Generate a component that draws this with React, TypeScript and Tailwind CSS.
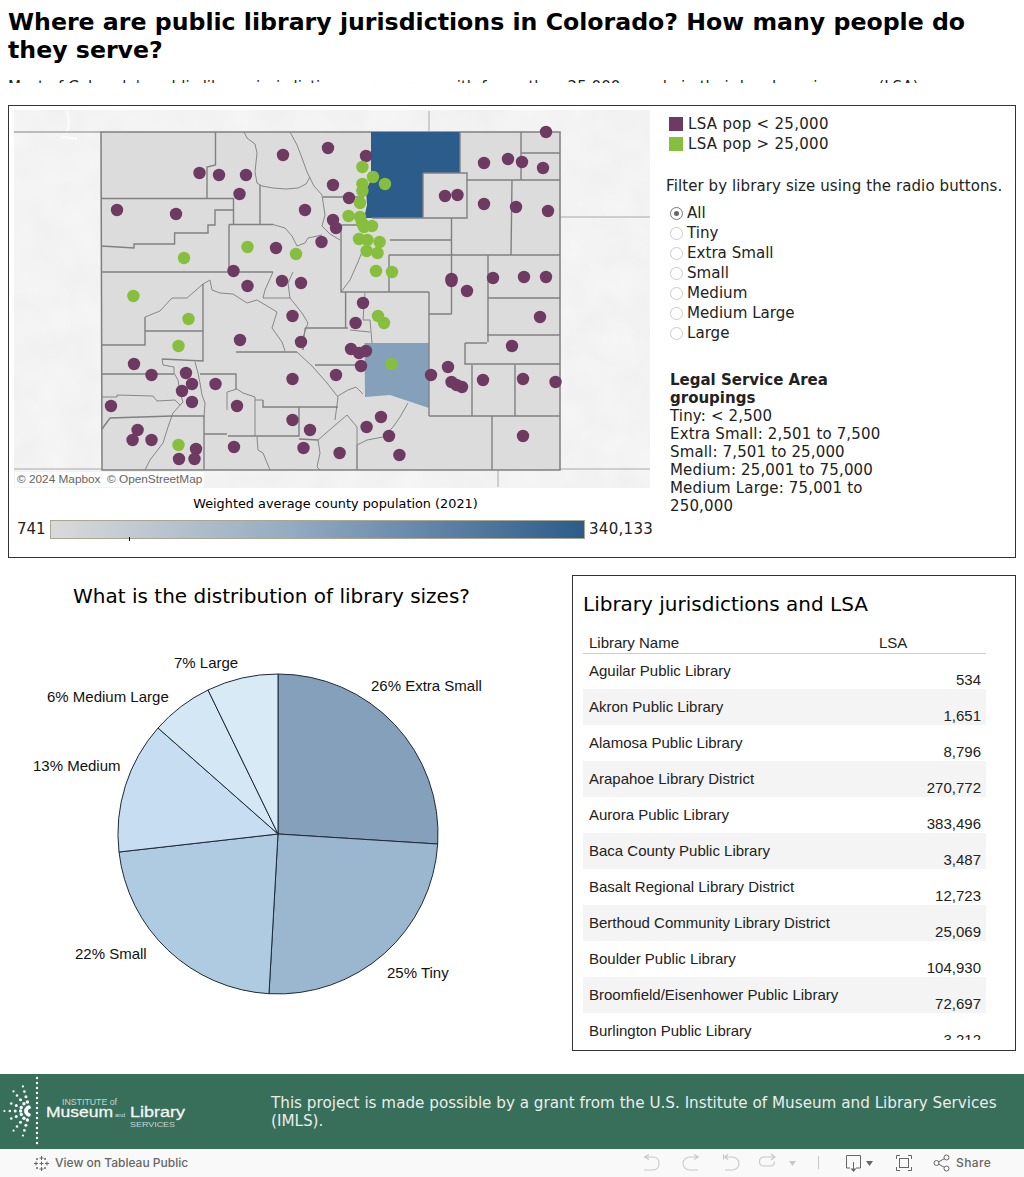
import React from "react";

const dejavu = "font-['DejaVu_Sans',sans-serif]";

const purpleDots = [
  [546, 132], [328, 148], [283, 155], [366, 156], [199.5, 173], [219, 175], [246, 175], [239.5, 194],
  [333, 185], [349, 198], [305, 210], [117, 210], [176, 214], [484, 163], [508, 159], [522, 162],
  [543, 168], [445, 196], [457.5, 195], [484, 204], [516, 207], [548, 211], [333, 220], [336, 228],
  [321.5, 242], [276, 248], [233.5, 271], [247.5, 286], [282, 281], [301, 283], [451.5, 279], [451.5, 281],
  [467, 291], [493, 278], [524, 277], [546, 277], [363, 303], [292.5, 316], [355.6, 323], [540, 317],
  [240, 340], [301, 342], [512, 346], [351, 349], [359, 353], [366, 351], [361, 366], [134, 364],
  [151.5, 375], [186, 373], [192, 384], [215.5, 384], [182, 391], [192, 402], [111, 406], [237, 406],
  [336, 375], [292.5, 379], [431, 375], [448, 367], [451.5, 382], [456.5, 385], [462, 387], [483, 380],
  [523, 379], [555.5, 382], [292.5, 420], [310, 430], [381, 417], [366.6, 427], [389, 436], [523, 436],
  [137.6, 430], [132.6, 440], [151.5, 440], [196, 449], [179, 459], [194.5, 459], [234, 447], [303.5, 448],
  [339.6, 453], [399.4, 455],
];

const greenDots = [
  [362.4, 167], [373, 177], [385, 184], [362.4, 184], [362.4, 191], [360, 203], [348.5, 216], [360, 217],
  [362, 223], [364, 227], [372, 226], [359, 239], [367.4, 240], [379.6, 242], [366.6, 251], [377.5, 253],
  [376, 271], [392, 272], [247.5, 247], [296, 254], [184, 258], [133.4, 296], [188.5, 319], [178.5, 346],
  [378, 316], [384, 323], [391.4, 364], [178.5, 445],
];

// county borders in page pixels: straight section lines are heavier than the river ones
const straightLines = [
  "M215.5 132V165L207 167V198",
  "M101 198.5H233.5V224",
  "M101 246L134 248V244H174.6V233H208V225H215V210H233.5",
  "M260 185V224",
  "M229 224.5H273",
  "M229 224.5V272",
  "M101 272H273",
  "M323 197H364",
  "M341 225H372",
  "M341 225V292H389V255",
  "M389 255H560",
  "M451.5 218V314",
  "M451.5 240H390",
  "M423 173H467V218H423V173",
  "M372 218H451",
  "M460 132V173",
  "M467 180H560",
  "M512 180L511 255",
  "M521 132V180",
  "M521 153H560",
  "M488 255V342",
  "M488 298H560",
  "M487 335H560",
  "M465 343H487",
  "M465 343V364H560",
  "M429 292V416",
  "M429 314H451.5",
  "M429 416H560",
  "M345.6 292H429",
  "M345.6 292V328",
  "M472 365V416",
  "M515 365V416",
  "M492 416V470",
  "M305 328H348",
  "M101 345H145V317",
  "M145.7 331H203",
  "M203 284V361L162 359",
  "M102 374H174",
  "M200 374H236V389",
  "M236 352H297",
  "M102 429L110 418L172 416H204V470",
  "M204 434H227",
  "M228 436H299V407",
  "M263 400V407H338",
  "M299 439L318 440",
  "M315 365H363",
  "M357 445V470",
];

const riverLines = [
  "M244 132L247 138L255 144L257 153L255 172L257 183L262 186L273 188L286 189L298 188L306 184L310 177",
  "M290 132L297 145L302 158L307 172L314 186L322 195L325 215L322 226L330 234L340 240",
  "M273 224.5L285 228L292 236L297 246L305 243L308 238L322 235",
  "M341 292L350 280L358 262L362 252",
  "M350 330L370 332",
  "M365 293L363 320H370L372 343",
  "M305 328L303 350",
  "M145 317L160 311L172 298H187L203 284L210 280",
  "M162 359L163 365L174 367V373L178 380L180 393L183 402L173 413L168 427L163 443L150 460L145 470",
  "M195 362L198 373L200 383L202 395L205 403L204 417",
  "M102 397H117V395L153 396L157 401L175 400L180 405",
  "M227 410V392L237 389L243 393L255 397V436",
  "M255 400H263",
  "M257 437L258 450L263 453L270 470",
  "M318 440L333 427L347 415L357 427V445",
  "M318 440L320 453L317 467L320 470",
  "M357 445L367 440L383 437L393 427L400 417L408 403",
  "M297 352L313 367L327 383L338 397L335 420",
  "M338 396L348 390L356 387L363 394",
  "M210 280L212 290L220 293L233 294L247 303L257 300L277 312L272 328L282 342L285 351",
  "M273 272L265 290L263 298H290",
  "M293 272L288 283L290 298L302 313L308 323L303 337L303 350",
];

const pieSlices = [
  { d: "M278 834L278 674A160 160 0 0 1 437.7 844Z", fill: "#85a0ba" },
  { d: "M278 834L437.7 844A160 160 0 0 1 269 993.7Z", fill: "#9bb7d0" },
  { d: "M278 834L269 993.7A160 160 0 0 1 119 852Z", fill: "#afcbe2" },
  { d: "M278 834L119 852A160 160 0 0 1 158 728Z", fill: "#c7ddf1" },
  { d: "M278 834L158 728A160 160 0 0 1 208 690Z", fill: "#d3e7f5" },
  { d: "M278 834L208 690A160 160 0 0 1 278 674Z", fill: "#d7eaf6" },
];

const sizes = ["All", "Tiny", "Extra Small", "Small", "Medium", "Medium Large", "Large"];

const libraries = [
  ["Aguilar Public Library", "534"],
  ["Akron Public Library", "1,651"],
  ["Alamosa Public Library", "8,796"],
  ["Arapahoe Library District", "270,772"],
  ["Aurora Public Library", "383,496"],
  ["Baca County Public Library", "3,487"],
  ["Basalt Regional Library District", "12,723"],
  ["Berthoud Community Library District", "25,069"],
  ["Boulder Public Library", "104,930"],
  ["Broomfield/Eisenhower Public Library", "72,697"],
  ["Burlington Public Library", "3,212"],
];

function ColoradoMap() {
  return (
    <svg viewBox="14 110 636 378" className="block w-[636px] h-[378px]">
      <defs>
        <filter id="mottle" x="0" y="0" width="100%" height="100%">
          <feTurbulence type="fractalNoise" baseFrequency="0.03" numOctaves="3" seed="4" />
          <feColorMatrix type="matrix" values="0 0 0 0.07 0.86  0 0 0 0.07 0.86  0 0 0 0.07 0.86  0 0 0 0 1" />
        </filter>
      </defs>
      <rect x="14" y="110" width="636" height="378" fill="#e8e8e8" />
      <rect x="14" y="110" width="636" height="378" filter="url(#mottle)" />
      <path d="M67 111L69 120L68 129L66 134M60 138L64 137L77 139" fill="none" stroke="#fafafa" strokeWidth="2.5" />
      <path d="M560 217H650M14 469H650M429 111V131M498 470V487" fill="none" stroke="#a8a8a8" strokeWidth="1" />
      <path d="M14 132H101" fill="none" stroke="#a8a8a8" strokeWidth="1.5" />
      <path d="M101 132H560V470H102Z" fill="#dcdcdc" stroke="#7f7f7f" strokeWidth="1.5" />
      <path d="M371 132H460V173H423V218H364L367 205L366 190L371 180Z" fill="#2b5c8a" />
      <path d="M364.5 343H429V408L390 395L365 397Z" fill="#85a0ba" />
      <path d={straightLines.join(" ")} fill="none" stroke="#808080" strokeWidth="1.4" />
      <path d={riverLines.join(" ")} fill="none" stroke="#7d7d7d" strokeWidth="0.9" />
      {purpleDots.map(([x, y], i) => (
        <circle key={i} cx={x} cy={y} r="6.2" fill="#6f3a62" />
      ))}
      {greenDots.map(([x, y], i) => (
        <circle key={i} cx={x} cy={y} r="6.2" fill="#86bf3e" />
      ))}
    </svg>
  );
}

function PieChart() {
  return (
    <svg viewBox="0 630 560 380" className="block w-[560px] h-[380px]">
      {pieSlices.map((s) => (
        <path key={s.fill} d={s.d} fill={s.fill} stroke="#1f2937" strokeWidth="1" />
      ))}
      <g className="font-['Liberation_Sans',sans-serif]" fontSize="15" fill="#111">
        <text x="371" y="691">26% Extra Small</text>
        <text x="387" y="978">25% Tiny</text>
        <text x="75" y="959">22% Small</text>
        <text x="33" y="771">13% Medium</text>
        <text x="47" y="702">6% Medium Large</text>
        <text x="174" y="668">7% Large</text>
      </g>
    </svg>
  );
}

function ImlsLogo() {
  const dots: React.ReactElement[] = [];
  for (let y = 1078; y <= 1145; y += 5) {
    dots.push(<circle key={"v" + y} cx="37" cy={y} r="1.2" fill="#fff" />);
  }
  const rays: [number, number][] = [[0, 5], [22, 4], [-22, 4], [50, 5], [-50, 5], [74, 5], [-74, 5]];
  rays.forEach(([deg, count]) => {
    const a = ((180 + deg) * Math.PI) / 180;
    for (let i = 0; i < count; i++) {
      const dist = 4 + i * 5.4;
      dots.push(
        <circle
          key={deg + "-" + i}
          cx={30 + Math.cos(a) * dist}
          cy={1111 + Math.sin(a) * dist}
          r={1.9 - i * 0.2}
          fill="#fff"
        />
      );
    }
  });
  return (
    <svg viewBox="0 1074 200 75" className="block w-[200px] h-[75px] shrink-0">
      {dots}
      <g className="font-['Liberation_Sans',sans-serif]">
        <text x="62" y="1105" fontSize="8.5" fill="#c9d6cf" textLength="55" lengthAdjust="spacingAndGlyphs">INSTITUTE of</text>
        <text x="46" y="1117" fontSize="15" fill="#f4f4f4" stroke="#f4f4f4" strokeWidth="0.3" textLength="67" lengthAdjust="spacingAndGlyphs">Museum</text>
        <text x="115" y="1117" fontSize="6" fill="#d5dfd9">and</text>
        <text x="130" y="1117" fontSize="15.5" fill="#f4f4f4" stroke="#f4f4f4" strokeWidth="0.3" textLength="55" lengthAdjust="spacingAndGlyphs">Library</text>
        <text x="130" y="1127" fontSize="8" fill="#c9d6cf" textLength="45" lengthAdjust="spacingAndGlyphs">SERVICES</text>
      </g>
    </svg>
  );
}

function Toolbar() {
  return (
    <div className="h-7 bg-[#f9f9f9] flex items-center font-['Inter',sans-serif] text-xs text-[#666] pl-[33px] pr-[33px]">
      <svg viewBox="0 0 17 17" className="w-[17px] h-[17px] mr-[5px]" fill="none" stroke="#666" strokeWidth="1">
        <path d="M8.5 1V5M6.5 3H10.5M8.5 12V16M6.5 14H10.5M1 8.5H5M3 6.5V10.5M12 8.5H16M14 6.5V10.5M8.5 6.5V10.5M6.5 8.5H10.5M4 3V5M3 4H5M12 3V5M11 4H13M4 12V14M3 13H5M12 12V14M11 13H13" />
      </svg>
      <span className="font-medium">View on Tableau Public</span>
      <div className="ml-auto flex items-center">
        <svg viewBox="640 1154 316 20" className="w-[316px] h-5" fill="none">
          <g stroke="#c8c8c8" strokeWidth="1.1">
            <path d="M650 1155.5L645.5 1158L650 1160.5M646 1158H654C658 1158 660 1161 660 1164.5C660 1168 658 1171 654 1171H645" />
            <path d="M695 1155.5L699.5 1158L695 1160.5M699 1158H691C687 1158 684 1161 684 1164.5C684 1168 687 1171 691 1171H699" />
            <path d="M724.5 1155.5V1160.5M729 1155.5L725.5 1158L729 1160.5M726 1158H733C737 1158 740 1161 740 1164.5C740 1168 737 1171 733 1171H726" />
            <path d="M772 1155L776 1158L772 1161M775 1158H765C762 1158 760.5 1160 760.5 1162.5C760.5 1165 762 1167 765 1167H771C774 1167 775.5 1165 775.5 1162.5" />
            <path d="M819.5 1157V1170" />
          </g>
          <path d="M790 1162H797L793.5 1167Z" fill="#c8c8c8" />
          <g stroke="#666" strokeWidth="1">
            <path d="M851 1169H847.5V1156.5H861.5V1169H857M854.5 1163V1170" />
            <path d="M897.5 1160V1156.5H901M909 1156.5H912.5V1160M912.5 1168V1171.5H909M901 1171.5H897.5V1168" />
            <rect x="900.5" y="1159.5" width="9" height="9" />
            <circle cx="937.5" cy="1164" r="2.5" />
            <circle cx="947.5" cy="1158.5" r="2.5" />
            <circle cx="947.5" cy="1169.5" r="2.5" />
            <path d="M939.7 1162.8L945.3 1159.7M939.7 1165.2L945.3 1168.3" />
          </g>
          <path d="M851.5 1169.5H857.5L854.5 1173Z" fill="#666" />
          <path d="M867 1162H874L870.5 1167Z" fill="#666" />
        </svg>
        <span className="font-medium w-[35px] ml-[1px] tracking-[0.4px]">Share</span>
      </div>
    </div>
  );
}

export default function App() {
  return (
    <div className={`w-[1024px] h-[1177px] bg-white overflow-hidden text-black ${dejavu}`}>
      {/* title, the intro line is cut off by the dashboard zone */}
      <div className="h-[83px] overflow-hidden px-2 pt-2">
        <h1 className="text-[23.65px] leading-[28px] font-bold">
          Where are public library jurisdictions in Colorado? How many people do they serve?
        </h1>
        <p className="mt-[14px] text-[15.1px] leading-[18px] whitespace-nowrap text-[#222]">
          Most of Colorado's public library jurisdictions serve areas with fewer than 25,000 people in their legal service area (LSA).
        </p>
      </div>

      {/* map panel */}
      <section className="mt-[22px] mx-2 h-[453px] border border-[#333] flex">
        <div className="w-[657px] shrink-0 pl-[5px] pt-1">
          <div className="relative">
            <ColoradoMap />
            <div className="absolute left-[1px] bottom-[1px] h-[15px] bg-white/80 px-[2px] font-['Liberation_Sans',sans-serif] text-[11.8px] leading-[15px] text-[#666]">
              © 2024 Mapbox&nbsp; © OpenStreetMap
            </div>
          </div>
          <div className="mt-[8px] text-center text-[12.85px] leading-4 pr-[9px]">Weighted average county population (2021)</div>
          <div className="mt-[7px] flex items-center h-[20px] text-[15px] text-[#222]">
            <span className="w-[36px] pl-[3px]">741</span>
            <div className="relative w-[535px] h-[19px] border border-[#a9a691] bg-gradient-to-r from-[#dadada] via-[#94abc1] via-45% to-[#2b5c8a]">
              <div className="absolute left-[78px] bottom-[-3px] w-px h-[4px] bg-black" />
            </div>
            <span className="ml-[4px] tracking-[0.3px]">340,133</span>
          </div>
        </div>
        <div className="flex-1 min-w-0 pt-[8px] text-[#222]">
          <div className="pl-[3px] text-[15px] leading-[20px] tracking-[0.3px]">
            <div className="flex items-center gap-[5px]">
              <span className="w-[14px] h-[14px] bg-[#6f3a62]" />
              LSA pop &lt; 25,000
            </div>
            <div className="flex items-center gap-[5px]">
              <span className="w-[14px] h-[14px] bg-[#86bf3e]" />
              LSA pop &gt; 25,000
            </div>
          </div>
          <p className="mt-[22px] text-[15px] leading-[20px] whitespace-nowrap tracking-[0.1px]">Filter by library size using the radio buttons.</p>
          <div className="mt-[7px] pl-[4px]">
            {sizes.map((s, i) => (
              <div key={s} className="h-5 flex items-center gap-[4px] text-[15.1px]">
                <span
                  className={
                    i === 0
                      ? "w-[13px] h-[13px] rounded-full border border-[#777] flex items-center justify-center"
                      : "w-[13px] h-[13px] rounded-full border border-[#ccc]"
                  }
                >
                  {i === 0 && <span className="w-[5px] h-[5px] rounded-full bg-[#666]" />}
                </span>
                {s}
              </div>
            ))}
          </div>
          <div className="mt-[28px] ml-[4px] w-[222px] text-[15px] leading-[18px] tracking-[0.15px]">
            <div className="font-bold tracking-normal">Legal Service Area groupings</div>
            <div>Tiny: &lt; 2,500</div>
            <div>Extra Small: 2,501 to 7,500</div>
            <div>Small: 7,501 to 25,000</div>
            <div>Medium: 25,001 to 75,000</div>
            <div>Medium Large: 75,001 to 250,000</div>
          </div>
        </div>
      </section>

      {/* pie and table */}
      <div className="mt-[17px] mx-2 h-[476px] flex">
        <div className="w-[564px] shrink-0">
          <h2 className="text-center text-[20px] leading-6 pt-[9px] pr-[29px] -ml-2">What is the distribution of library sizes?</h2>
          <div className="-ml-2 mt-[22px]">
            <PieChart />
          </div>
        </div>
        <div className="flex-1 border border-[#333] px-[10px] pt-[16px]">
          <h2 className="text-[20px] leading-6">Library jurisdictions and LSA</h2>
          <div className="mt-[14px] w-[403px] h-[410px] overflow-hidden font-['Liberation_Sans',sans-serif] text-[15px] text-[#222]">
            <div className="h-[24px] flex items-center px-[6px] border-b border-[#ccc] pt-[4px]">
              <span className="w-[290px]">Library Name</span>
              <span>LSA</span>
            </div>
            {libraries.map(([name, lsa], i) => (
              <div key={name} className={i % 2 === 1 ? "h-9 -mt-px mb-px bg-[#f4f4f4] flex justify-between pr-[5px] pl-[6px]" : "h-9 flex justify-between pr-[5px] pl-[6px]"}>
                <span className={i % 2 === 1 ? "pt-[9px] leading-[18px]" : "pt-[8px] leading-[18px]"}>{name}</span>
                <span className={i % 2 === 1 ? "pt-[18px] leading-[18px]" : "pt-[17px] leading-[18px]"}>{lsa}</span>
              </div>
            ))}
          </div>
        </div>
      </div>

      {/* footer */}
      <div className="mt-[23px] h-[75px] bg-[#376f5a] flex items-center">
        <ImlsLogo />
        <p className={`ml-[71px] w-[735px] text-[15.2px] leading-[18px] text-[#ececec] ${dejavu}`}>
          This project is made possible by a grant from the U.S. Institute of Museum and Library Services (IMLS).
        </p>
      </div>
      <Toolbar />
    </div>
  );
}
